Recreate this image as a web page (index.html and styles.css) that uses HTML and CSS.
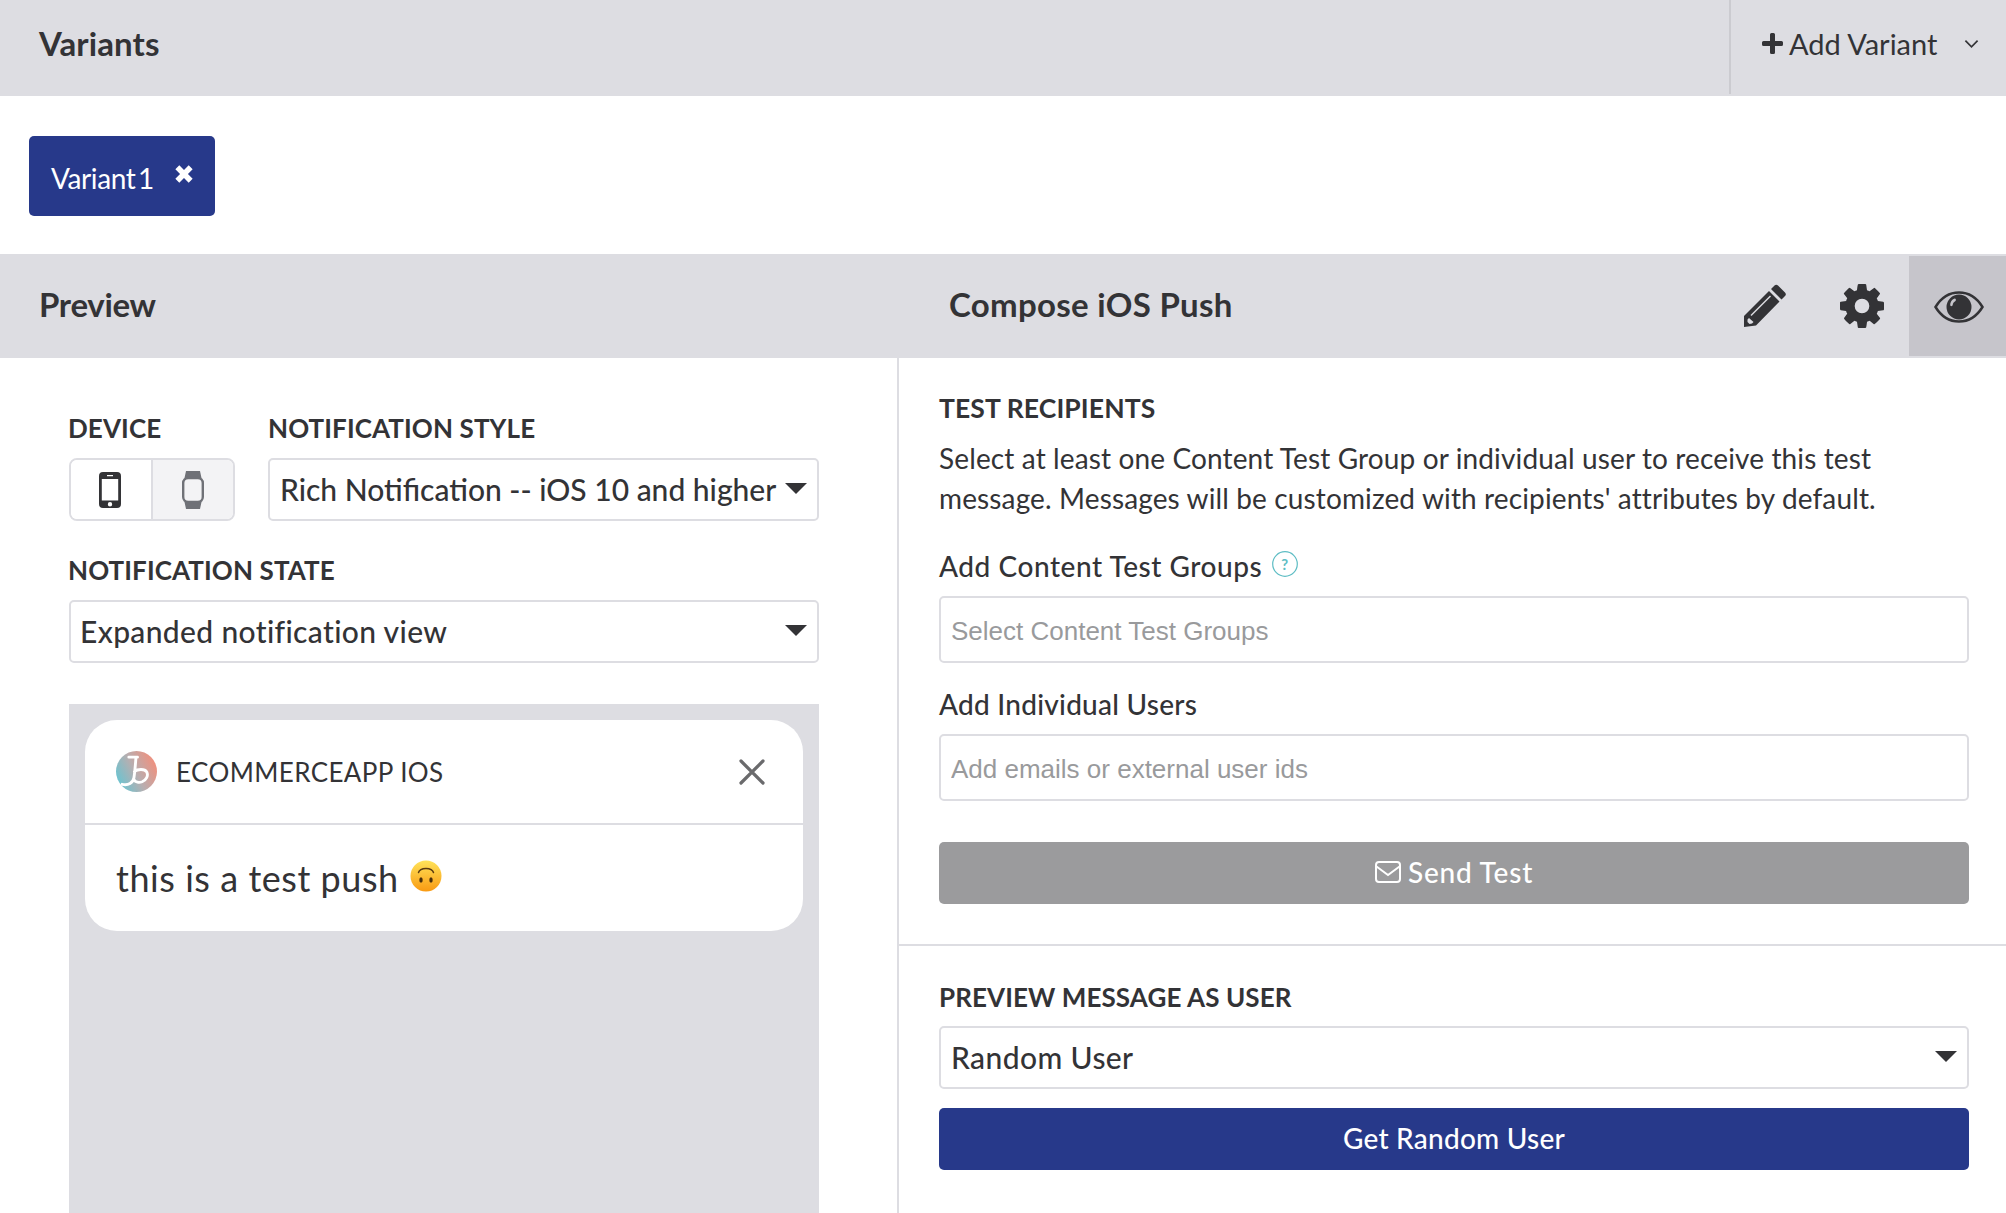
FILE: index.html
```html
<!DOCTYPE html>
<html lang="en">
<head>
<meta charset="utf-8">
<title>Variants</title>
<link rel="stylesheet" href="styles.css">
</head>
<body>
<div class="page">
  <header class="bar bar-top">
    <h2 class="bar-title">Variants</h2>
    <button class="add-variant">
      <svg class="plus" viewBox="0 0 21 21"><path d="M8 1.500a1.500 1.500 0 0 1 1.500-1.500h2A1.500 1.500 0 0 1 13 1.500V8h6.500A1.500 1.500 0 0 1 21 9.500v2a1.500 1.500 0 0 1-1.500 1.500H13v6.500a1.500 1.500 0 0 1-1.500 1.500h-2A1.500 1.500 0 0 1 8 19.500V13H1.500A1.500 1.500 0 0 1 0 11.500v-2A1.500 1.500 0 0 1 1.500 8H8z"/></svg>
      <span>Add Variant</span>
      <svg class="chev" viewBox="0 0 16 10"><path d="M1.500 1.500 8 8l6.500-6.500"/></svg>
    </button>
  </header>

  <section class="tabs">
    <div class="tab">
      <span class="tab-label">Variant 1</span>
      <svg class="tab-x" viewBox="0 0 18 18"><path d="M3 3l12 12m0-12L3 15"/></svg>
    </div>
  </section>

  <header class="bar bar-sub">
    <h2 class="bar-title col-left">Preview</h2>
    <h2 class="bar-title col-right">Compose iOS Push</h2>
    <div class="tools">
      <span class="tool">
        <svg class="i-pencil" viewBox="0 0 44 44"><path fill-rule="evenodd" d="M31.500 1.500a2.500 2.500 0 0 1 3.500 0l7 7a2.500 2.500 0 0 1 0 3.500l-3.500 3.500L28 5zM26 7l10.500 10.500L13 41.500 1 43V32zM27 11.500 7.500 31l1 1L28 12.500zM6 34l-1.500 1.500V38l2 2 2.500-.5 1.500-1.500z"/></svg>
      </span>
      <span class="tool">
        <svg class="i-cog" viewBox="128 128 1536 1536"><path d="M1152 896q0-106-75-181t-181-75-181 75-75 181 75 181 181 75 181-75 75-181zm512-109v222q0 12-8 23t-20 13l-185 28q-19 54-39 91 35 50 107 138 10 12 10 25t-9 23q-27 37-99 108t-94 71q-12 0-26-9l-138-108q-44 23-91 38-16 136-29 186-7 28-36 28h-222q-14 0-24.500-8.500t-11.500-21.500l-28-184q-49-16-90-37l-141 107q-10 9-25 9-14 0-25-11-126-114-165-168-7-10-7-23 0-12 8-23 15-21 51-66.500t54-70.500q-27-50-41-99l-183-27q-13-2-21-12.500t-8-23.500v-222q0-12 8-23t19-13l186-28q14-46 39-92-40-57-107-138-10-12-10-24 0-10 9-23 26-36 98.500-107.500t94.500-71.500q13 0 26 10l138 107q44-23 91-38 16-136 29-186 7-28 36-28h222q14 0 24.500 8.500t11.500 21.500l28 184q49 16 90 37l142-107q9-9 24-9 13 0 25 10 129 119 165 170 7 8 7 22 0 12-8 23-15 21-51 66.500t-54 70.500q26 50 41 98l183 28q13 2 21 12.500t8 23.500z"/></svg>
      </span>
      <span class="tool tool-active">
        <svg class="i-eye" viewBox="0 0 50 32"><path class="eye-line" d="M1.500 16C7 7 15 1.500 25 1.500S43 7 48.500 16C43 25 35 30.500 25 30.500S7 25 1.500 16z"/><path fill-rule="evenodd" d="M25 3.500a12.500 12.500 0 1 1 0 25 12.500 12.500 0 0 1 0-25zM19.500 8c-2 1.200-3.300 3.500-3.300 6 0 1.500 2.300 1.500 2.500 0 .2-1.800 1-3 2.500-3.800 1.200-.7.800-2.700-.5-2.700-.4 0-.7.200-1.200.5z"/></svg>
      </span>
    </div>
  </header>

  <main class="columns">
    <section class="left">
      <div class="row-top">
        <div class="field">
          <label class="cap">DEVICE</label>
          <div class="device-group">
            <span class="device device-on">
              <svg class="i-phone" viewBox="0 0 22 36"><path fill-rule="evenodd" d="M4 0h14a4 4 0 0 1 4 4v28a4 4 0 0 1-4 4H4a4 4 0 0 1-4-4V4a4 4 0 0 1 4-4zM2.800 7v21.500h16.400V7zM11 30a2.200 2.200 0 1 0 0 4.400A2.200 2.200 0 0 0 11 30zM8 3v1.200h6V3z"/></svg>
            </span>
            <span class="device">
              <svg class="i-watch" viewBox="0 0 22 38"><path d="M4 0h14l1.500 7h-17zM2.500 31h17L18 38H4z"/><rect class="watch-case" x="1.200" y="7" width="19.600" height="24" rx="5"/></svg>
            </span>
          </div>
        </div>
        <div class="field grow">
          <label class="cap">NOTIFICATION STYLE</label>
          <div class="select select-narrow"><span>Rich Notification -- iOS 10 and higher</span><i class="caret"></i></div>
        </div>
      </div>
      <div class="field state">
        <label class="cap">NOTIFICATION STATE</label>
        <div class="select select-wide"><span>Expanded notification view</span><i class="caret"></i></div>
      </div>
      <div class="phone">
        <article class="card">
          <div class="card-head">
            <svg class="logo" viewBox="0 0 40 40">
              <defs><linearGradient id="lg" x1="0" y1="0.800" x2="1" y2="0.300"><stop offset="0" stop-color="#62c6d4"/><stop offset="0.500" stop-color="#b8aeb0"/><stop offset="1" stop-color="#f28f7c"/></linearGradient></defs>
              <circle cx="20" cy="20" r="20" fill="url(#lg)"/>
              <path class="logo-b" d="M12.500 6H21M19.500 6C19 12 18.500 20 17.500 26c-.9 5-5.500 8-11.500 6.500M18 20c3-2.500 10-3 12 .5 1.800 3.500-.5 8-4.500 9.500-3 1-6.500.5-8-2"/>
            </svg>
            <span class="app">ECOMMERCEAPP IOS</span>
            <svg class="close" viewBox="0 0 26 26"><path d="M2 2l22 22M24 2 2 24"/></svg>
          </div>
          <div class="card-body">
            <span>this is a test push</span>
            <svg class="emoji" viewBox="0 0 32 32">
              <defs><linearGradient id="em" x1="0" y1="0" x2="0" y2="1"><stop offset="0" stop-color="#ffe35a"/><stop offset="1" stop-color="#f99a12"/></linearGradient></defs>
              <circle cx="16" cy="16" r="15.500" fill="url(#em)"/>
              <path d="M8.500 12.500C10 7 22 7 23.500 12.500" fill="none" stroke="#5a3a10" stroke-width="1.500" stroke-linecap="round"/>
              <ellipse cx="11" cy="20" rx="1.700" ry="2.800" fill="#4a2f0c"/><ellipse cx="21" cy="20" rx="1.700" ry="2.800" fill="#4a2f0c"/>
            </svg>
          </div>
        </article>
      </div>
    </section>

    <section class="right">
      <div class="right-top">
        <h3 class="cap cap-test">TEST RECIPIENTS</h3>
        <p class="desc">Select at least one Content Test Group or individual user to receive this test message. Messages will be customized with recipients' attributes by default.</p>
        <label class="sub sub-first">Add Content Test Groups
          <svg class="help" viewBox="0 0 26 26"><circle cx="13" cy="13" r="12.300"/><text x="13" y="18.500" text-anchor="middle">?</text></svg>
        </label>
        <input class="input" placeholder="Select Content Test Groups">
        <label class="sub sub-second">Add Individual Users</label>
        <input class="input" placeholder="Add emails or external user ids">
        <button class="btn btn-grey">
          <svg class="i-mail" viewBox="0 0 26 22"><rect x="1" y="1" width="24" height="20" rx="3"/><path d="M1.500 5.500 13 14 24.500 5.500"/></svg>
          <span>Send Test</span>
        </button>
      </div>
      <div class="right-bottom">
        <h3 class="cap">PREVIEW MESSAGE AS USER</h3>
        <div class="select select-user"><span>Random User</span><i class="caret"></i></div>
        <button class="btn btn-blue">Get Random User</button>
      </div>
    </section>
  </main>
</div>
</body>
</html>
```

FILE: styles.css
```css
* { box-sizing: border-box; }
html, body { margin: 0; padding: 0; background: #fff; }
body { font-family: "Lato", "Liberation Sans", sans-serif; color: #333336; }
.page { width: 2006px; height: 1213px; overflow: hidden; display: flex; flex-direction: column; }

.bar { background: #dddde2; display: flex; align-items: center; flex: none; }
.bar-title { margin: 0; font-size: 33px; font-weight: 700; letter-spacing: .3px; line-height: 1; color: #333336; }
.bar-top { height: 96px; padding-left: 39px; justify-content: space-between; align-items: stretch; }
.bar-top .bar-title { align-self: center; margin-top: -9px; letter-spacing: .1px; }
.add-variant { width: 277px; height: 94px; background: none; border: 0; border-left: 2px solid #cbcbd0; padding: 0 0 7px 31px; display: flex; align-items: center; font: 400 29px "Lato", sans-serif; color: #333336; }
.plus { width: 21px; height: 21px; fill: #333336; margin-right: 6px; }
.chev { width: 15px; height: 10px; margin-left: 27px; fill: none; stroke: #333336; stroke-width: 1.800; }

.tabs { height: 158px; padding: 40px 0 0 29px; flex: none; }
.tab { width: 186px; height: 80px; border-radius: 5px; background: #27398a; color: #fff; display: flex; align-items: center; padding: 4px 0 0 22px; font-size: 28px; }
.tab-label { word-spacing: -4px; letter-spacing: -.4px; }
.tab-x { width: 20px; height: 20px; margin: -8px 0 0 20px; fill: none; stroke: #fff; stroke-width: 5; }

.bar-sub { height: 104px; position: relative; padding-bottom: 4px; }
.col-left { width: 949px; padding-left: 39px; letter-spacing: -.3px; }
.tools { margin-left: auto; display: flex; align-self: stretch; margin-bottom: -4px; padding-top: 2px; }
.tool { width: 97px; height: 100px; display: flex; align-items: center; justify-content: center; padding-left: 3px; }
.tool svg { fill: #333336; }
.tool-active { background: #c6c5cb; padding-top: 2px; }
.i-pencil { width: 44px; height: 44px; }
.i-cog { width: 44px; height: 44px; }
.i-eye { width: 50px; height: 32px; }
.eye-line { fill: none; stroke: #333336; stroke-width: 2.500; }

.columns { flex: 1; display: grid; grid-template-columns: 899px 1fr; min-height: 0; }
.left { padding: 56px 78px 0 68px; border-right: 2px solid #dddde2; display: flex; flex-direction: column; }
.row-top { display: flex; gap: 33px; }
.field { display: flex; flex-direction: column; }
.grow { flex: 1; }
.cap { display: block; margin: 0; font-size: 26px; font-weight: 700; letter-spacing: .1px; line-height: 28px; color: #333336; }
.cap-test { font-size: 26.500px; }
.row-top .cap { margin-bottom: 16px; }
.state { margin-top: 35px; }
.state .cap { margin-bottom: 16px; }

.device-group { display: flex; width: 166px; height: 63px; border: 2px solid #dddde2; border-radius: 8px; overflow: hidden; margin-left: 1px; }
.device { flex: 1; display: flex; align-items: center; justify-content: center; background: #f3f3f5; }
.device-on { flex: 0 0 82px; background: #fff; border-right: 2px solid #dddde2; padding-right: 2px; }
.i-phone { width: 22px; height: 36px; fill: #333336; }
.i-watch { width: 22px; height: 38px; fill: #6f7177; }
.watch-case { fill: #f3f3f5; stroke: #6f7177; stroke-width: 2.400; }

.select { height: 63px; border: 2px solid #dddde2; border-radius: 5px; background: #fff; display: flex; align-items: center; justify-content: space-between; padding: 0 10px 1px; font-size: 30px; font-weight: 500; color: #333336; }
.select-narrow { letter-spacing: 0; }
.select-wide { letter-spacing: .35px; margin-left: 1px; padding-left: 9px; }
.select-user { letter-spacing: .4px; }
.caret { width: 0; height: 0; border-left: 11px solid transparent; border-right: 11px solid transparent; border-top: 11px solid #333336; flex: none; margin-top: -1px; }

.phone { margin-top: 41px; height: 600px; background: #dddde2; padding: 16px 16px 0; flex: none; margin-left: 1px; }
.card { background: #fff; border-radius: 32px; height: 211px; }
.card-head { height: 105px; border-bottom: 2px solid #dddde2; display: flex; align-items: center; padding: 0 38px 0 31px; }
.logo { width: 41px; height: 41px; flex: none; }
.logo-b { fill: none; stroke: #fff; stroke-width: 2.800; stroke-linecap: round; }
.app { font-size: 26px; letter-spacing: .4px; margin-left: 19px; flex: 1; color: #333336; }
.close { width: 26px; height: 26px; fill: none; stroke: #6a6a6c; stroke-width: 3.200; stroke-linecap: round; }
.card-body { height: 106px; display: flex; align-items: center; padding-left: 31px; font-size: 36px; letter-spacing: .54px; color: #333336; }
.emoji { width: 32px; height: 32px; margin-left: 11px; margin-top: -4px; }

.right { display: flex; flex-direction: column; }
.right-top { padding: 36px 37px 40px 40px; border-bottom: 2px solid #dddde2; }
.right-bottom { padding: 37px 37px 0 40px; }
.desc { margin: 16px 0 0; font-size: 28px; letter-spacing: .13px; line-height: 40px; color: #333336; }
.sub { display: flex; align-items: center; font-size: 28px; font-weight: 500; line-height: 32px; color: #333336; }
.sub-first { margin-top: 32px; margin-bottom: 14px; letter-spacing: .55px; }
.sub-second { margin-top: 25px; margin-bottom: 14px; letter-spacing: .25px; }
.help { width: 26px; height: 26px; margin: -4px 0 0 10px; }
.help circle { fill: none; stroke: #5ebdc4; stroke-width: 1.200; }
.help text { fill: #5ebdc4; font: 700 15px "Lato", sans-serif; }
.input { display: block; width: 100%; height: 67px; border: 2px solid #dddde2; border-radius: 5px; padding: 3px 10px 0; font: 26px "Liberation Sans", sans-serif; color: #333; outline: 0; }
.input::placeholder { color: #999a9c; opacity: 1; }
.btn { display: flex; align-items: center; justify-content: center; width: 100%; height: 62px; border: 0; border-radius: 5px; padding: 0 0 2px; color: #fff; font: 500 28px "Lato", sans-serif; letter-spacing: .25px; }
.btn-grey { background: #9b9b9d; margin-top: 41px; letter-spacing: .8px; }
.btn-blue { background: #27398a; margin-top: 19px; }
.i-mail { width: 26px; height: 22px; margin-right: 7px; fill: none; stroke: #fff; stroke-width: 2; }
.right-bottom .cap { margin-bottom: 15px; }
```
